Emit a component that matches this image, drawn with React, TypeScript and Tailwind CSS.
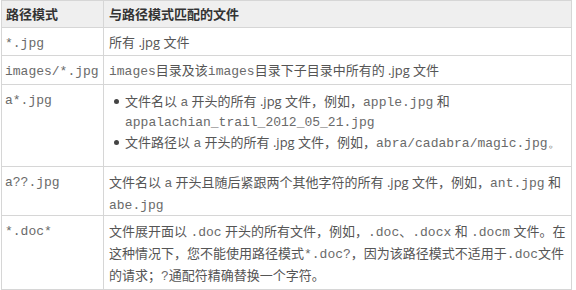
import React from "react";

const sans = "font-['Open_Sans','Noto_Sans_CJK_SC',sans-serif]";

function Code({ children }: { children: React.ReactNode }) {
  return <span className="font-['Liberation_Mono',monospace] text-[#6a6a6a]">{children}</span>;
}

interface Row {
  pattern: string;
  cls: string;
  body: React.ReactNode;
}

const rows: Row[] = [
  {
    pattern: "*.jpg",
    cls: "h-[28px]",
    body: <>所有 .jpg 文件</>,
  },
  {
    pattern: "images/*.jpg",
    cls: "h-[29px]",
    body: (
      <>
        <Code>images</Code>目录及该<Code>images</Code>目录下子目录中所有的 .jpg 文件
      </>
    ),
  },
  {
    pattern: "a*.jpg",
    cls: "h-[82px]",
    body: (
      <ul className="mt-[2px] leading-[19px]">
        <li className="flex">
          <span className="w-[16px] shrink-0 pl-[5px] pt-[7px]">
            <span className="block w-[5px] h-[5px] rounded-full bg-[#444]" />
          </span>
          <span>
            文件名以 <Code>a</Code> 开头的所有 .jpg 文件，例如，<Code>apple.jpg</Code> 和
            <br />
            <Code>appalachian_trail_2012_05_21.jpg</Code>
          </span>
        </li>
        <li className="flex mt-[1px]">
          <span className="w-[16px] shrink-0 pl-[5px] pt-[7px]">
            <span className="block w-[5px] h-[5px] rounded-full bg-[#444]" />
          </span>
          <span>
            文件路径以 <Code>a</Code> 开头的所有 .jpg 文件，例如，<Code>abra/cadabra/magic.jpg。</Code>
          </span>
        </li>
      </ul>
    ),
  },
  {
    pattern: "a??.jpg",
    cls: "h-[49px]",
    body: (
      <div className="leading-[21px]">
        文件名以 <Code>a</Code> 开头且随后紧跟两个其他字符的所有 .jpg 文件，例如，<Code>ant.jpg</Code> 和
        <br />
        <Code>abe.jpg</Code>
      </div>
    ),
  },
  {
    pattern: "*.doc*",
    cls: "h-[73px]",
    body: (
      <div className="leading-[21px]">
        文件展开面以 <Code>.doc</Code> 开头的所有文件，例如，<Code>.doc</Code>、<Code>.docx</Code> 和 <Code>.docm</Code> 文件。在
        <br />
        这种情况下，您不能使用路径模式<Code>*.doc?</Code>，因为该路径模式不适用于<Code>.doc</Code>文件
        <br />
        的请求；<Code>?</Code>通配符精确替换一个字符。
      </div>
    ),
  },
];

export default function App() {
  return (
    <div className={`w-[576px] h-[290px] bg-white pt-0 pl-[1px] ${sans}`}>
      <div className="w-[571px] border border-[#d6d6d6] text-[13px] text-[#555]">
        <div className="flex h-[27px] bg-[#efefef] border-b border-[#d6d6d6] font-bold text-[#333]">
          <div className="w-[102px] shrink-0 border-r border-[#d6d6d6] pl-[4px] leading-[26px]">
            路径模式
          </div>
          <div className="flex-1 pl-[5px] leading-[26px]">与路径模式匹配的文件</div>
        </div>
        {rows.map((r, i) => (
          <div
            key={i}
            className={`flex ${r.cls} ${i < rows.length - 1 ? "border-b border-[#d6d6d6]" : ""}`}
          >
            <div className="w-[102px] shrink-0 border-r border-[#d6d6d6] pl-[3px] pt-[5px] leading-[18px]">
              <Code>{r.pattern}</Code>
            </div>
            <div className="flex-1 pl-[5px] pt-[5px] leading-[18px] whitespace-nowrap">
              {r.body}
            </div>
          </div>
        ))}
      </div>
    </div>
  );
}
